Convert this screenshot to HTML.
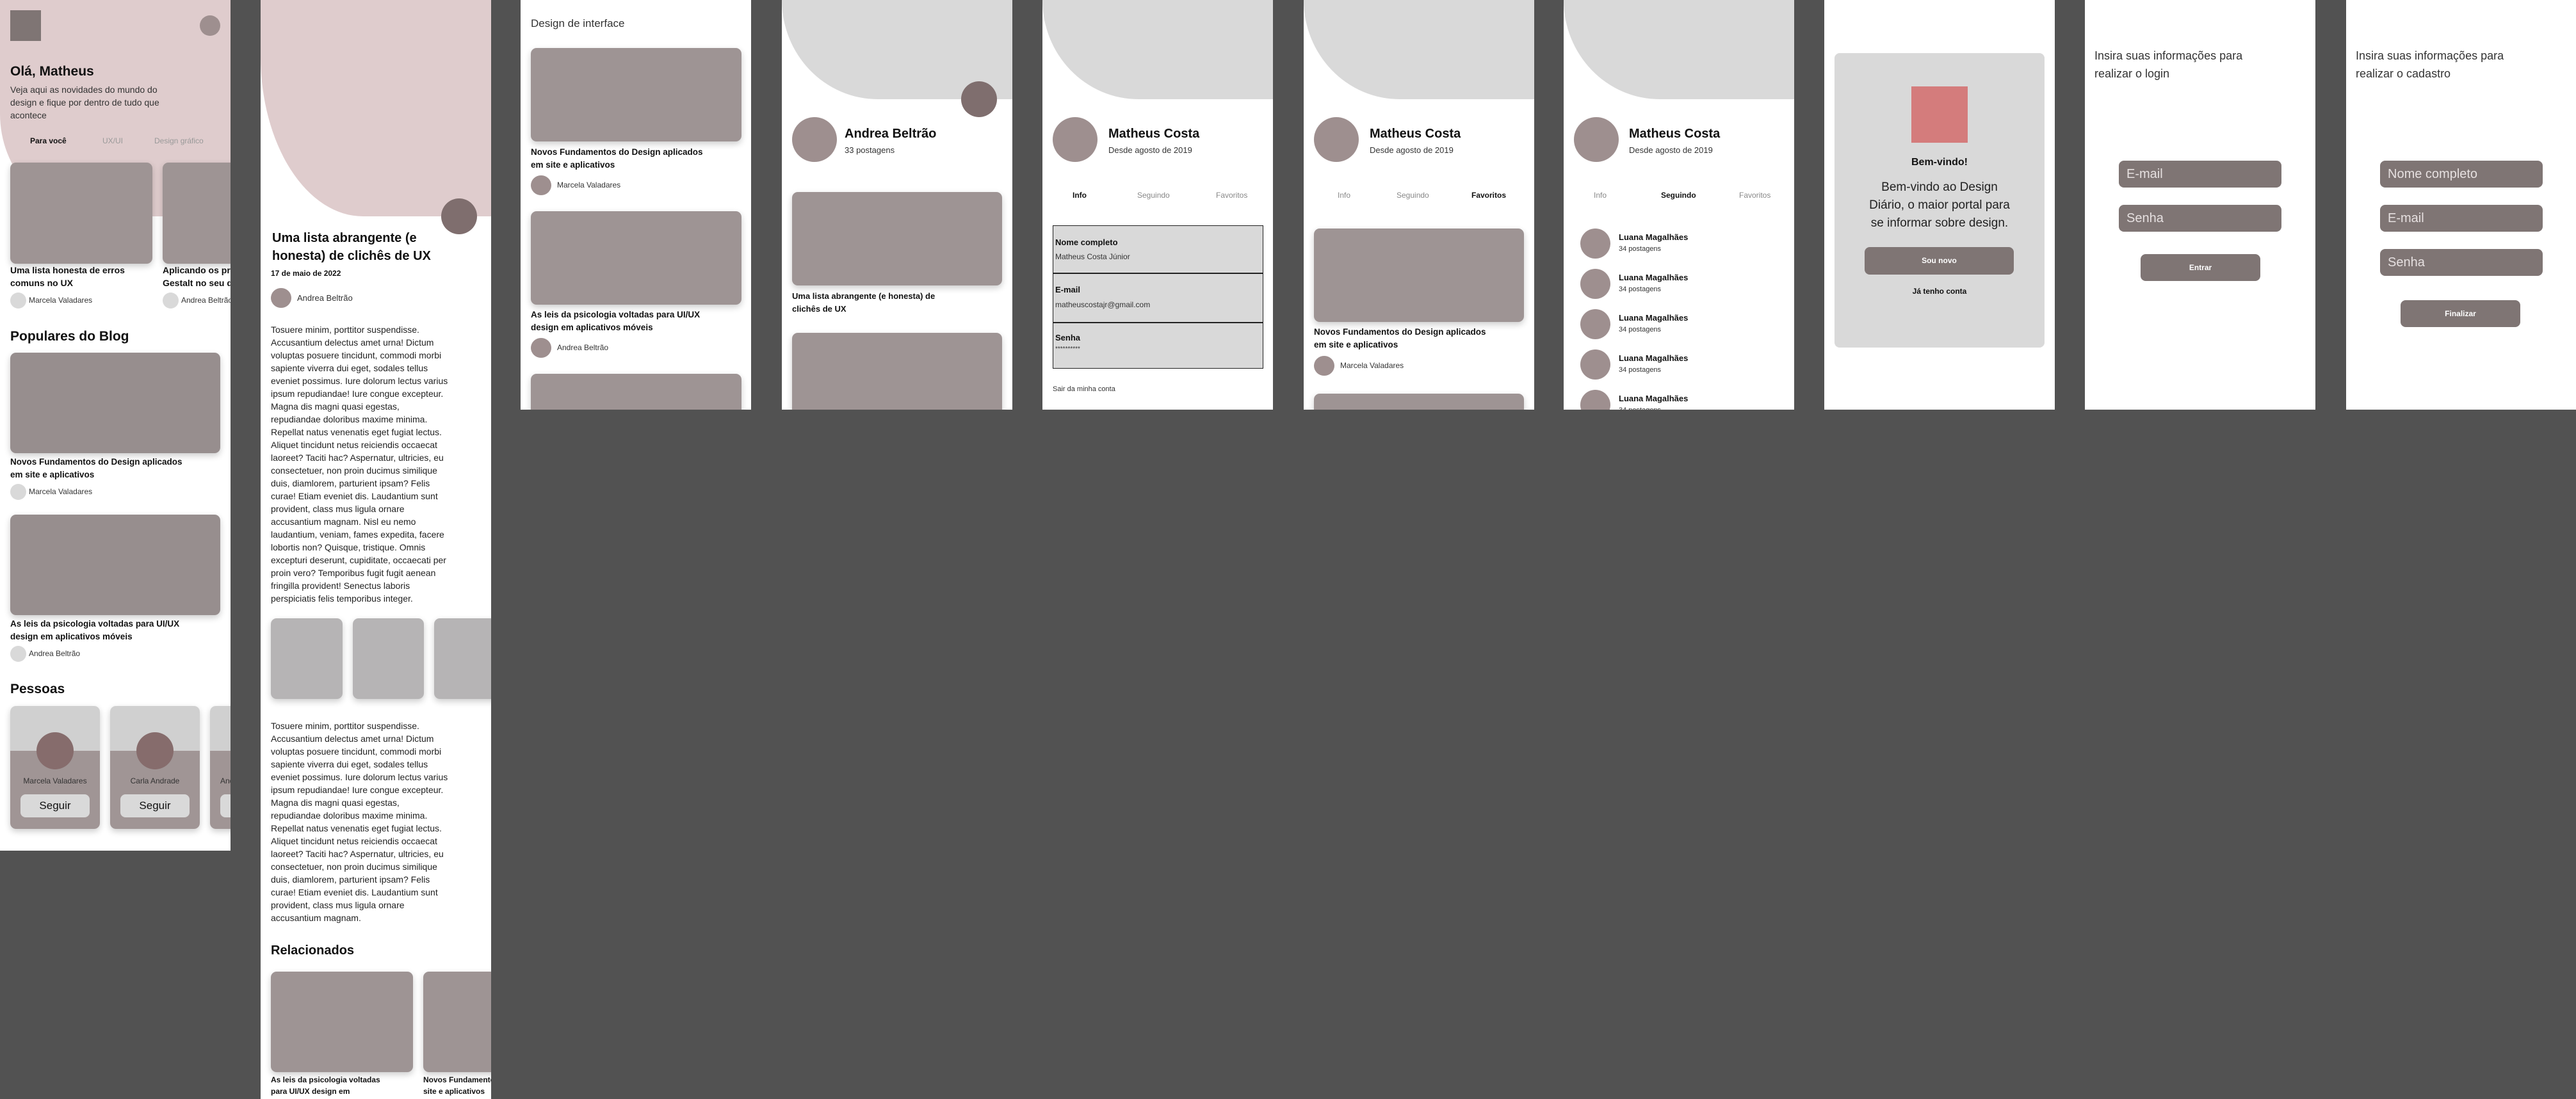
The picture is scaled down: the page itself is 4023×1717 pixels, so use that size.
<!DOCTYPE html>
<html><head><meta charset="utf-8"><style>
*{margin:0;padding:0;box-sizing:border-box}
body{width:4023px;height:1717px;background:#525252;position:relative;overflow:hidden;font-family:"Liberation Sans",sans-serif;color:#111}
.f{position:absolute;top:0;background:#fff;overflow:hidden;width:360px;height:640px}
.a{position:absolute}
.card{position:absolute;background:#9e9494;border-radius:9px;box-shadow:0 4px 10px rgba(0,0,0,.2)}
.t{position:absolute;font-size:14px;font-weight:bold;line-height:20px;white-space:nowrap}
.s{position:absolute;font-size:12px;color:#333;white-space:nowrap}
.c{position:absolute;border-radius:50%}
.p{position:absolute;font-size:14px;line-height:20px;color:#222;white-space:nowrap}
.inp{position:absolute;background:#7f7574;border-radius:8px;color:#e6e0e0;font-size:20px;padding:10px 12px;line-height:22px}
.btn{position:absolute;background:#7f7574;border-radius:8px;color:#fff;font-size:12px;font-weight:bold;text-align:center}
.gs{position:absolute;left:0;top:0;width:360px;height:155px;background:#d9d9d9;border-bottom-left-radius:150px 155px}
</style></head><body>

<!-- Frame 1 -->
<div class="f" style="left:0;height:1329px">
 <div class="a" style="left:0;top:0;width:360px;height:338px;background:#dfcccd;border-bottom-left-radius:150px 160px"></div>
 <div class="a" style="left:16px;top:16px;width:48px;height:48px;background:#7f7574"></div>
 <div class="c" style="left:312px;top:24px;width:32px;height:32px;background:#9e8f8f"></div>
 <div class="a" style="left:16px;top:100px;font-size:21px;font-weight:bold">Olá, Matheus</div>
 <div class="p" style="left:16px;top:130px;color:#333">Veja aqui as novidades do mundo do<br>design e fique por dentro de tudo que<br>acontece</div>
 <div class="s" style="left:47px;top:213px;font-weight:bold;color:#111">Para você</div>
 <div class="s" style="left:160px;top:213px;color:#999">UX/UI</div>
 <div class="s" style="left:241px;top:213px;color:#999">Design gráfico</div>
 <div class="card" style="left:16px;top:254px;width:222px;height:158px"></div>
 <div class="card" style="left:254px;top:254px;width:222px;height:158px"></div>
 <div class="t" style="left:16px;top:412px">Uma lista honesta de erros<br>comuns no UX</div>
 <div class="t" style="left:254px;top:412px">Aplicando os princípios da<br>Gestalt no seu design</div>
 <div class="c" style="left:16px;top:457px;width:25px;height:25px;background:#d9d9d9"></div>
 <div class="s" style="left:45px;top:462px">Marcela Valadares</div>
 <div class="c" style="left:254px;top:457px;width:25px;height:25px;background:#d9d9d9"></div>
 <div class="s" style="left:283px;top:462px">Andrea Beltrão</div>
 <div class="a" style="left:16px;top:514px;font-size:21px;font-weight:bold">Populares do Blog</div>
 <div class="card" style="left:16px;top:551px;width:328px;height:157px;background:#978e8e"></div>
 <div class="t" style="left:16px;top:712px;font-size:13.5px;line-height:20px">Novos Fundamentos do Design aplicados<br>em site e aplicativos</div>
 <div class="c" style="left:16px;top:756px;width:25px;height:25px;background:#d9d9d9"></div>
 <div class="s" style="left:45px;top:761px">Marcela Valadares</div>
 <div class="card" style="left:16px;top:804px;width:328px;height:157px;background:#978e8e"></div>
 <div class="t" style="left:16px;top:965px;font-size:13.5px;line-height:20px">As leis da psicologia voltadas para UI/UX<br>design em aplicativos móveis</div>
 <div class="c" style="left:16px;top:1009px;width:25px;height:25px;background:#d9d9d9"></div>
 <div class="s" style="left:45px;top:1014px">Andrea Beltrão</div>
 <div class="a" style="left:16px;top:1065px;font-size:21px;font-weight:bold">Pessoas</div>
 <div class="card" style="left:16px;top:1103px;width:140px;height:192px;background:linear-gradient(#d0d0d0 0 70px,#a09595 70px)"></div>
 <div class="card" style="left:172px;top:1103px;width:140px;height:192px;background:linear-gradient(#d0d0d0 0 70px,#a09595 70px)"></div>
 <div class="card" style="left:328px;top:1103px;width:140px;height:192px;background:linear-gradient(#d0d0d0 0 70px,#a09595 70px)"></div>
 <div class="c" style="left:57px;top:1144px;width:58px;height:58px;background:#866c6c"></div>
 <div class="c" style="left:213px;top:1144px;width:58px;height:58px;background:#866c6c"></div>
 <div class="s" style="left:16px;width:140px;text-align:center;top:1213px">Marcela Valadares</div>
 <div class="s" style="left:172px;width:140px;text-align:center;top:1213px">Carla Andrade</div>
 <div class="s" style="left:344px;top:1213px">Andrea</div>
 <div class="a" style="left:32px;top:1241px;width:108px;height:36px;background:#d9d9d9;border-radius:8px;font-size:17px;text-align:center;line-height:36px">Seguir</div>
 <div class="a" style="left:188px;top:1241px;width:108px;height:36px;background:#d9d9d9;border-radius:8px;font-size:17px;text-align:center;line-height:36px">Seguir</div>
 <div class="a" style="left:344px;top:1241px;width:108px;height:36px;background:#d9d9d9;border-radius:8px"></div>
</div>

<!-- Frame 2 -->
<div class="f" style="left:407px;height:1717px">
 <div class="a" style="left:0;top:0;width:360px;height:338px;background:#dfcccd;border-bottom-left-radius:160px 250px"></div>
 <div class="c" style="left:282px;top:310px;width:56px;height:56px;background:#7f6e6e"></div>
 <div class="a" style="left:18px;top:358px;font-size:20px;font-weight:bold;line-height:28px">Uma lista abrangente (e<br>honesta) de clichês de UX</div>
 <div class="s" style="left:16px;top:420px;font-weight:bold;color:#111">17 de maio de 2022</div>
 <div class="c" style="left:16px;top:450px;width:32px;height:31px;background:#9e8f8f"></div>
 <div class="s" style="left:57px;top:458px;font-size:13px">Andrea Beltrão</div>
 <div class="p" style="left:16px;top:505px">Tosuere minim, porttitor suspendisse.<br>Accusantium delectus amet urna! Dictum<br>voluptas posuere tincidunt, commodi morbi<br>sapiente viverra dui eget, sodales tellus<br>eveniet possimus. Iure dolorum lectus varius<br>ipsum repudiandae! Iure congue excepteur.<br>Magna dis magni quasi egestas,<br>repudiandae doloribus maxime minima.<br>Repellat natus venenatis eget fugiat lectus.<br>Aliquet tincidunt netus reiciendis occaecat<br>laoreet? Taciti hac? Aspernatur, ultricies, eu<br>consectetuer, non proin ducimus similique<br>duis, diamlorem, parturient ipsam? Felis<br>curae! Etiam eveniet dis. Laudantium sunt<br>provident, class mus ligula ornare<br>accusantium magnam. Nisl eu nemo<br>laudantium, veniam, fames expedita, facere<br>lobortis non? Quisque, tristique. Omnis<br>excepturi deserunt, cupiditate, occaecati per<br>proin vero? Temporibus fugit fugit aenean<br>fringilla provident! Senectus laboris<br>perspiciatis felis temporibus integer.</div>
 <div class="card" style="left:16px;top:966px;width:112px;height:126px;background:#b6b4b5"></div>
 <div class="card" style="left:144px;top:966px;width:111px;height:126px;background:#b6b4b5"></div>
 <div class="card" style="left:271px;top:966px;width:112px;height:126px;background:#b6b4b5"></div>
 <div class="p" style="left:16px;top:1124px">Tosuere minim, porttitor suspendisse.<br>Accusantium delectus amet urna! Dictum<br>voluptas posuere tincidunt, commodi morbi<br>sapiente viverra dui eget, sodales tellus<br>eveniet possimus. Iure dolorum lectus varius<br>ipsum repudiandae! Iure congue excepteur.<br>Magna dis magni quasi egestas,<br>repudiandae doloribus maxime minima.<br>Repellat natus venenatis eget fugiat lectus.<br>Aliquet tincidunt netus reiciendis occaecat<br>laoreet? Taciti hac? Aspernatur, ultricies, eu<br>consectetuer, non proin ducimus similique<br>duis, diamlorem, parturient ipsam? Felis<br>curae! Etiam eveniet dis. Laudantium sunt<br>provident, class mus ligula ornare<br>accusantium magnam.</div>
 <div class="a" style="left:16px;top:1474px;font-size:20px;font-weight:bold">Relacionados</div>
 <div class="card" style="left:16px;top:1518px;width:222px;height:157px"></div>
 <div class="card" style="left:254px;top:1518px;width:222px;height:157px"></div>
 <div class="t" style="left:16px;top:1678px;font-size:12px;line-height:18px">As leis da psicologia voltadas<br>para UI/UX design em</div>
 <div class="t" style="left:254px;top:1678px;font-size:12px;line-height:18px">Novos Fundamentos do Design em<br>site e aplicativos</div>
</div>

<!-- Frame 3 -->
<div class="f" style="left:813px">
 <div class="a" style="left:16px;top:27px;font-size:17px;color:#333">Design de interface</div>
 <div class="card" style="left:16px;top:75px;width:329px;height:146px"></div>
 <div class="t" style="left:16px;top:228px;font-size:13.5px">Novos Fundamentos do Design aplicados<br>em site e aplicativos</div>
 <div class="c" style="left:16px;top:274px;width:32px;height:31px;background:#9e8f8f"></div>
 <div class="s" style="left:57px;top:282px">Marcela Valadares</div>
 <div class="card" style="left:16px;top:330px;width:329px;height:146px"></div>
 <div class="t" style="left:16px;top:482px;font-size:13.5px">As leis da psicologia voltadas para UI/UX<br>design em aplicativos móveis</div>
 <div class="c" style="left:16px;top:528px;width:32px;height:31px;background:#9e8f8f"></div>
 <div class="s" style="left:57px;top:536px">Andrea Beltrão</div>
 <div class="card" style="left:16px;top:584px;width:329px;height:146px"></div>
</div>

<!-- Frame 4 -->
<div class="f" style="left:1221px">
 <div class="gs"></div>
 <div class="c" style="left:280px;top:127px;width:56px;height:56px;background:#7f6e6e"></div>
 <div class="c" style="left:16px;top:183px;width:70px;height:70px;background:#9e8f8f"></div>
 <div class="a" style="left:98px;top:198px;font-size:20px;font-weight:bold">Andrea Beltrão</div>
 <div class="s" style="left:98px;top:227px;font-size:13px">33 postagens</div>
 <div class="card" style="left:16px;top:300px;width:328px;height:146px"></div>
 <div class="t" style="left:16px;top:453px;font-size:13px">Uma lista abrangente (e honesta) de<br>clichês de UX</div>
 <div class="card" style="left:16px;top:520px;width:328px;height:146px"></div>
</div>

<!-- Frame 5 -->
<div class="f" style="left:1628px">
 <div class="gs"></div>
 <div class="c" style="left:16px;top:183px;width:70px;height:70px;background:#9e8f8f"></div>
 <div class="a" style="left:103px;top:198px;font-size:20px;font-weight:bold">Matheus Costa</div>
 <div class="s" style="left:103px;top:227px;font-size:13px">Desde agosto de 2019</div>
 <div class="s" style="left:47px;top:298px;font-weight:bold;color:#111">Info</div>
 <div class="s" style="left:148px;top:298px;color:#888">Seguindo</div>
 <div class="s" style="left:271px;top:298px;color:#888">Favoritos</div>
 <div class="a" style="left:16px;top:352px;width:329px;height:224px;background:#d9d9d9;border:1.5px solid #222"></div>
 <div class="a" style="left:16px;top:426px;width:329px;height:1.5px;background:#222"></div>
 <div class="a" style="left:16px;top:503px;width:329px;height:1.5px;background:#222"></div>
 <div class="s" style="left:20px;top:371px;font-size:13px;font-weight:bold;color:#111">Nome completo</div>
 <div class="s" style="left:20px;top:394px">Matheus Costa Júnior</div>
 <div class="s" style="left:20px;top:445px;font-size:13px;font-weight:bold;color:#111">E-mail</div>
 <div class="s" style="left:20px;top:469px">matheuscostajr@gmail.com</div>
 <div class="s" style="left:20px;top:520px;font-size:13px;font-weight:bold;color:#111">Senha</div>
 <div class="s" style="left:20px;top:540px;font-size:10px">**********</div>
 <div class="s" style="left:16px;top:602px;font-size:11px">Sair da minha conta</div>
</div>

<!-- Frame 6 -->
<div class="f" style="left:2036px">
 <div class="gs"></div>
 <div class="c" style="left:16px;top:183px;width:70px;height:70px;background:#9e8f8f"></div>
 <div class="a" style="left:103px;top:198px;font-size:20px;font-weight:bold">Matheus Costa</div>
 <div class="s" style="left:103px;top:227px;font-size:13px">Desde agosto de 2019</div>
 <div class="s" style="left:53px;top:298px;color:#888">Info</div>
 <div class="s" style="left:145px;top:298px;color:#888">Seguindo</div>
 <div class="s" style="left:262px;top:298px;font-weight:bold;color:#111">Favoritos</div>
 <div class="card" style="left:16px;top:357px;width:328px;height:146px"></div>
 <div class="t" style="left:16px;top:509px;font-size:13.5px">Novos Fundamentos do Design aplicados<br>em site e aplicativos</div>
 <div class="c" style="left:16px;top:556px;width:32px;height:31px;background:#9e8f8f"></div>
 <div class="s" style="left:57px;top:564px">Marcela Valadares</div>
 <div class="card" style="left:16px;top:615px;width:328px;height:146px"></div>
</div>

<!-- Frame 7 -->
<div class="f" style="left:2442px">
 <div class="gs"></div>
 <div class="c" style="left:16px;top:183px;width:70px;height:70px;background:#9e8f8f"></div>
 <div class="a" style="left:102px;top:198px;font-size:20px;font-weight:bold">Matheus Costa</div>
 <div class="s" style="left:102px;top:227px;font-size:13px">Desde agosto de 2019</div>
 <div class="s" style="left:47px;top:298px;color:#888">Info</div>
 <div class="s" style="left:152px;top:298px;font-weight:bold;color:#111">Seguindo</div>
 <div class="s" style="left:274px;top:298px;color:#888">Favoritos</div>
 <div class="c" style="left:26px;top:357px;width:47px;height:47px;background:#9e8f8f"></div>
 <div class="s" style="left:86px;top:363px;font-size:13px;font-weight:bold;color:#111">Luana Magalhães</div>
 <div class="s" style="left:86px;top:383px;font-size:11px">34 postagens</div>
 <div class="c" style="left:26px;top:420px;width:47px;height:47px;background:#9e8f8f"></div>
 <div class="s" style="left:86px;top:426px;font-size:13px;font-weight:bold;color:#111">Luana Magalhães</div>
 <div class="s" style="left:86px;top:446px;font-size:11px">34 postagens</div>
 <div class="c" style="left:26px;top:483px;width:47px;height:47px;background:#9e8f8f"></div>
 <div class="s" style="left:86px;top:489px;font-size:13px;font-weight:bold;color:#111">Luana Magalhães</div>
 <div class="s" style="left:86px;top:509px;font-size:11px">34 postagens</div>
 <div class="c" style="left:26px;top:546px;width:47px;height:47px;background:#9e8f8f"></div>
 <div class="s" style="left:86px;top:552px;font-size:13px;font-weight:bold;color:#111">Luana Magalhães</div>
 <div class="s" style="left:86px;top:572px;font-size:11px">34 postagens</div>
 <div class="c" style="left:26px;top:609px;width:47px;height:47px;background:#9e8f8f"></div>
 <div class="s" style="left:86px;top:615px;font-size:13px;font-weight:bold;color:#111">Luana Magalhães</div>
 <div class="s" style="left:86px;top:635px;font-size:11px">34 postagens</div>
</div>

<!-- Frame 8 -->
<div class="f" style="left:2849px">
 <div class="a" style="left:16px;top:83px;width:328px;height:460px;background:#d9d9d9;border-radius:8px"></div>
 <div class="a" style="left:136px;top:135px;width:88px;height:88px;background:#d47c7c"></div>
 <div class="a" style="left:0;width:360px;text-align:center;top:245px;font-size:16px;font-weight:bold">Bem-vindo!</div>
 <div class="a" style="left:0;width:360px;text-align:center;top:279px;font-size:19px;line-height:28px;color:#222">Bem-vindo ao Design<br>Diário, o maior portal para<br>se informar sobre design.</div>
 <div class="btn" style="left:63px;top:386px;width:233px;height:43px;line-height:43px">Sou novo</div>
 <div class="a" style="left:0;width:360px;text-align:center;top:448px;font-size:12px;font-weight:bold">Já tenho conta</div>
</div>

<!-- Frame 9 -->
<div class="f" style="left:3256px">
 <div class="a" style="left:15px;top:73px;font-size:18px;line-height:28px;color:#333">Insira suas informações para<br>realizar o login</div>
 <div class="inp" style="left:53px;top:251px;width:254px;height:42px">E-mail</div>
 <div class="inp" style="left:53px;top:320px;width:254px;height:42px">Senha</div>
 <div class="btn" style="left:87px;top:397px;width:187px;height:42px;line-height:42px">Entrar</div>
</div>

<!-- Frame 10 -->
<div class="f" style="left:3664px;width:359px">
 <div class="a" style="left:15px;top:73px;font-size:18px;line-height:28px;color:#333">Insira suas informações para<br>realizar o cadastro</div>
 <div class="inp" style="left:53px;top:251px;width:254px;height:42px">Nome completo</div>
 <div class="inp" style="left:53px;top:320px;width:254px;height:42px">E-mail</div>
 <div class="inp" style="left:53px;top:389px;width:254px;height:42px">Senha</div>
 <div class="btn" style="left:85px;top:469px;width:187px;height:42px;line-height:42px">Finalizar</div>
</div>

</body></html>
